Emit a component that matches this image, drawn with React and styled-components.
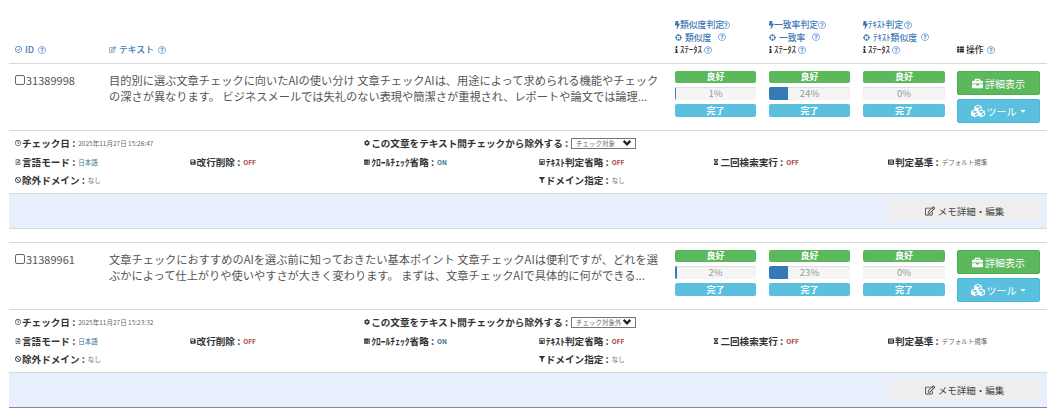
import React from "react";
import styled, { createGlobalStyle } from "styled-components";
import {
  FaBan,
  FaBolt,
  FaBriefcase,
  FaCalculator,
  FaCaretDown,
  FaCog,
  FaCrosshairs,
  FaCubes,
  FaFilter,
  FaHourglassHalf,
  FaInfo,
  FaListAlt,
  FaRegCheckCircle,
  FaRegClock,
  FaRegEdit,
  FaRegFileAlt,
  FaRegQuestionCircle,
  FaSave,
  FaServer,
  FaThList,
} from "react-icons/fa";

const Global = createGlobalStyle`
  * { box-sizing: border-box; }
  html, body { margin: 0; background: #fff; }
  body {
    font-family: "Noto Sans CJK JP", "Noto Sans", sans-serif;
    color: #333;
  }
`;

const Page = styled.div`
  width: 1056px;
  height: 419px;
  padding: 0 9px;
  overflow: hidden;
`;

const columns = "94px 566px 94px 94px 94px 96px";

const HeadRow = styled.div`
  display: grid;
  grid-template-columns: ${columns};
  height: 64px;
  padding: 18px 0 0 6px;
  border-bottom: 1px solid #d9d9d9;
`;

const HeadCell = styled.div`
  display: flex;
  flex-direction: column;
  justify-content: flex-end;
  padding-bottom: 7px;
`;

const HeadLine = styled.div`
  display: flex;
  align-items: center;
  gap: ${(p) => p.$gap}px;
  height: 12.5px;
  font-size: 8.8px;
  font-weight: 500;
  white-space: nowrap;
  color: ${(p) => p.$color || "#3a78b3"};
  svg { flex: none; }
`;

const Help = styled(FaRegQuestionCircle)`
  width: 8px;
  height: 8px;
  margin-left: ${(p) => p.$offset}px;
  color: #6f97d8;
`;

const Row = styled.div`
  display: grid;
  grid-template-columns: ${columns};
  height: 67px;
  padding: 7px 0 0 6px;
  border-bottom: 1px solid #d9d9d9;
`;

const IdCell = styled.label`
  display: flex;
  align-items: flex-start;
  font-size: 11px;
  line-height: 16px;
  padding-top: 1px;
  color: #555;
`;

const Check = styled.span`
  width: 10px;
  height: 10px;
  margin: 3px 1px 0 0;
  border: 1px solid #666;
  border-radius: 2px;
`;

const TextCell = styled.div`
  font-size: 11.22px;
  line-height: 16px;
  padding-top: 1px;
  color: #555;
  white-space: nowrap;
`;

const MeterCell = styled.div`
  display: flex;
  flex-direction: column;
  gap: 4px;
  width: ${(p) => p.$width}px;
`;

const Badge = styled.div`
  height: ${(p) => p.$height}px;
  border-radius: 2px;
  background: ${(p) => p.$color};
  color: #fff;
  font-size: 9px;
  font-weight: 700;
  line-height: ${(p) => p.$height}px;
  text-align: center;
`;

const Progress = styled.div`
  position: relative;
  height: 13px;
  border-radius: 2px;
  background: #f5f5f5;
  box-shadow: inset 0 1px 1px rgba(0, 0, 0, 0.1);
  overflow: hidden;
  color: #999;
  font-size: 9.5px;
  line-height: 13px;
  text-align: center;
`;

const ProgressFill = styled.div`
  position: absolute;
  inset: 0 auto 0 0;
  background: #337ab7;
`;

const ProgressLabel = styled.span`
  position: relative;
`;

const Actions = styled.div`
  display: flex;
  flex-direction: column;
  gap: 4px;
  width: 83px;
`;

const ActionButton = styled.div`
  display: flex;
  align-items: center;
  justify-content: center;
  gap: 2px;
  height: 24px;
  border-radius: 2px;
  border: 1px solid ${(p) => p.$border};
  background: ${(p) => p.$color};
  color: #fff;
  font-size: 10px;
`;

const Details = styled.div`
  height: 63px;
  padding: 3px 0 0 6px;
  border-bottom: 1px solid #d9d9d9;
  display: grid;
  grid-template-columns: repeat(6, 174.6px);
  grid-auto-rows: 18.5px;
`;

const Wide = styled.div`
  grid-column: span 2;
`;

const Item = styled.div`
  display: flex;
  align-items: center;
  height: 100%;
  grid-column: ${(p) => p.$column || "auto"};
  white-space: nowrap;
  font-size: 9.6px;
  font-weight: 700;
  color: #333;
  svg { width: 6px; height: 6px; margin-right: 1px; flex: none; }
`;

const Value = styled.span`
  margin-left: 3px;
  font-size: 6.5px;
  font-weight: ${(p) => (p.$strong ? 700 : 400)};
  color: ${(p) => p.$color || "#666"};
`;

const FakeSelect = styled.div`
  display: flex;
  align-items: center;
  justify-content: space-between;
  width: 65px;
  height: 11px;
  margin-left: 3px;
  padding: 0 3px 0 4px;
  border: 1px solid #767676;
  font-size: 6.5px;
  font-weight: 400;
  color: #666;
  svg { width: 10px; height: 10px; margin: 0; color: #222; }
`;

const MemoBar = styled.div`
  display: flex;
  justify-content: flex-end;
  height: 35px;
  padding: 6px 7px 0 0;
  background: #e7eefc;
  border-bottom: 1px solid ${(p) => (p.$last ? "#8a8a8a" : "#d9d9d9")};
`;

const MemoButton = styled.div`
  display: flex;
  align-items: center;
  justify-content: center;
  gap: 3px;
  width: 151px;
  height: 21px;
  background: #eee;
  border-radius: 2px;
  color: #444;
  font-size: 9.5px;
  svg { width: 10px; height: 10px; }
`;

const Gap = styled.div`
  height: 14px;
  border-bottom: 1px solid #d9d9d9;
`;

const Head = ({ icon, children, color, gap = 2, help = 2 }) => (
  <HeadLine $color={color} $gap={gap}>
    {icon}
    {children}
    <Help $offset={help} />
  </HeadLine>
);

const small = { width: 7, height: 7 };
const bolt = { width: 5, height: 8 };
const info = { width: 3, height: 7 };

const judgeColumns = [
  { judge: "類似度判定", label: "類似度", judgeHelp: -2, labelHelp: 4 },
  { judge: "一致率判定", label: "一致率", judgeHelp: 0, labelHelp: 4 },
  { judge: "ﾃｷｽﾄ判定", label: "ﾃｷｽﾄ類似度", judgeHelp: 1, labelHelp: 1 },
];

const records = [
  {
    id: "31389998",
    lines: [
      "目的別に選ぶ文章チェックに向いたAIの使い分け 文章チェックAIは、用途によって求められる機能やチェック",
      "の深さが異なります。 ビジネスメールでは失礼のない表現や簡潔さが重視され、レポートや論文では論理...",
    ],
    rates: [1, 24, 0],
    date: "2025年11月27日 15:26:47",
    target: "チェック対象",
  },
  {
    id: "31389961",
    lines: [
      "文章チェックにおすすめのAIを選ぶ前に知っておきたい基本ポイント 文章チェックAIは便利ですが、どれを選",
      "ぶかによって仕上がりや使いやすさが大きく変わります。 まずは、文章チェックAIで具体的に何ができる...",
    ],
    rates: [2, 23, 0],
    date: "2025年11月27日 15:23:32",
    target: "チェック対象外",
  },
];

function Record({ record, last }) {
  return (
    <>
      <Row>
        <IdCell>
          <Check />
          {record.id}
        </IdCell>
        <TextCell>
          {record.lines[0]}
          <br />
          {record.lines[1]}
        </TextCell>
        {record.rates.map((rate, i) => (
          <MeterCell key={i} $width={i === 2 ? 82 : 81}>
            <Badge $color="#5cb85c" $height={12}>良好</Badge>
            <Progress>
              <ProgressFill style={{ width: `${rate}%` }} />
              <ProgressLabel>{rate}%</ProgressLabel>
            </Progress>
            <Badge $color="#5bc0de" $height={13}>完了</Badge>
          </MeterCell>
        ))}
        <Actions>
          <ActionButton $color="#5cb85c" $border="#4cae4c">
            <FaBriefcase size={11} />
            詳細表示
          </ActionButton>
          <ActionButton $color="#5bc0de" $border="#46b8da">
            <FaCubes size={14} />
            ツール
            <FaCaretDown size={8} />
          </ActionButton>
        </Actions>
      </Row>
      <Details>
        <Wide>
          <Item>
            <FaRegClock />
            チェック日 :<Value>{record.date}</Value>
          </Item>
        </Wide>
        <Wide>
          <Item>
            <FaCog />
            この文章をテキスト間チェックから除外する :
            <FakeSelect>
              {record.target}
              <svg viewBox="0 0 12 12">
                <path d="M2 3.5l4 4 4-4" fill="none" stroke="currentColor" strokeWidth="2.8" />
              </svg>
            </FakeSelect>
          </Item>
        </Wide>
        <Wide />
        <Item>
          <FaRegFileAlt />
          言語モード :<Value $color="#31708f">日本語</Value>
        </Item>
        <Item>
          <FaSave />
          改行削除 :<Value $strong $color="#a94442">OFF</Value>
        </Item>
        <Item>
          <FaServer />
          ｸﾛｰﾙﾁｪｯｸ省略 :<Value $strong $color="#31708f">ON</Value>
        </Item>
        <Item>
          <FaCalculator />
          ﾃｷｽﾄ判定省略 :<Value $strong $color="#a94442">OFF</Value>
        </Item>
        <Item>
          <FaHourglassHalf />
          二回検索実行 :<Value $strong $color="#a94442">OFF</Value>
        </Item>
        <Item>
          <FaListAlt />
          判定基準 :<Value>デフォルト規準</Value>
        </Item>
        <Wide>
          <Item>
            <FaBan />
            除外ドメイン :<Value>なし</Value>
          </Item>
        </Wide>
        <Item $column={4}>
          <FaFilter />
          ドメイン指定 :<Value>なし</Value>
        </Item>
      </Details>
      <MemoBar $last={last}>
        <MemoButton>
          <FaRegEdit />
          メモ詳細・編集
        </MemoButton>
      </MemoBar>
    </>
  );
}

export default function App() {
  return (
    <Page>
      <Global />
      <HeadRow>
        <HeadCell>
          <Head gap={3} help={1} icon={<FaRegCheckCircle style={small} />}>ID</Head>
        </HeadCell>
        <HeadCell>
          <Head gap={3} help={1} icon={<FaRegEdit style={small} />}>テキスト</Head>
        </HeadCell>
        {judgeColumns.map(({ judge, label, judgeHelp, labelHelp }) => (
          <HeadCell key={judge}>
            <Head gap={0} help={judgeHelp} icon={<FaBolt style={bolt} />}>{judge}</Head>
            <Head gap={3} help={labelHelp} icon={<FaCrosshairs style={small} />}>{label}</Head>
            <Head gap={2} help={0} color="#333" icon={<FaInfo style={info} />}>ｽﾃｰﾀｽ</Head>
          </HeadCell>
        ))}
        <HeadCell>
          <Head gap={2} help={1} color="#333" icon={<FaThList style={small} />}>操作</Head>
        </HeadCell>
      </HeadRow>
      {records.map((record, i) => (
        <React.Fragment key={record.id}>
          <Record record={record} last={i === records.length - 1} />
          {i < records.length - 1 && <Gap />}
        </React.Fragment>
      ))}
    </Page>
  );
}
